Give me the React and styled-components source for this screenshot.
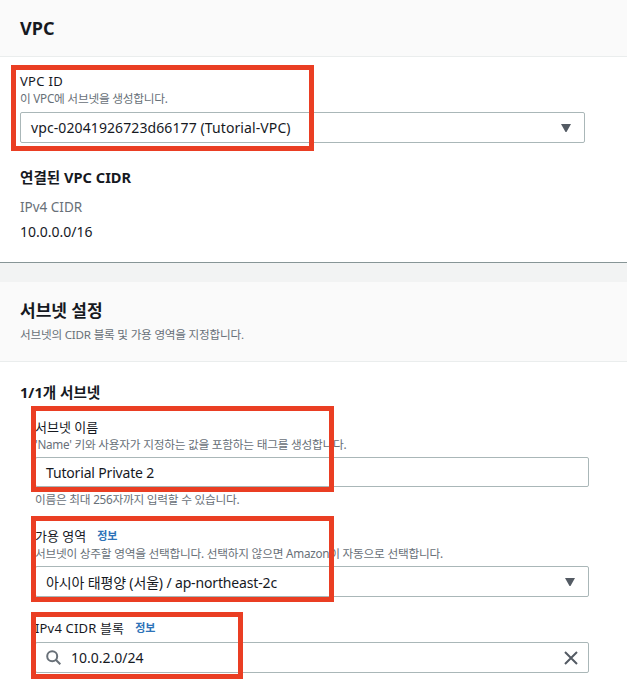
import React from "react";
import styled, { createGlobalStyle } from "styled-components";

const Global = createGlobalStyle`
  html, body { margin: 0; padding: 0; background: #fff; }
  body { font-family: "Noto Sans", "Noto Sans CJK KR", sans-serif; color: #16191f; width: 627px; height: 681px; overflow: hidden; }
`;
const Page = styled.div`position: relative; width: 627px; height: 681px; overflow: hidden;`;
const Head = styled.div`
  background: #fafafa; border-bottom: 1px solid #eaeded; padding: 0 20px;
  height: ${p => p.$h}px; display: flex; flex-direction: column; justify-content: center;
`;
const Title = styled.h2`margin: 0; font-size: ${p => p.$size}px; line-height: 22px; font-weight: 700;`;
const HeadDesc = styled.div`font-size: 11.6px; line-height: 16px; color: #687078; margin-top: 5px; letter-spacing: -0.2px;`;
const Body = styled.div`padding: ${p => p.$pad}; height: ${p => p.$h}px; box-sizing: border-box;`;
const Band = styled.div`height: 19px; background: #f2f3f3; border-top: 1px solid #879596;`;
const Field = styled.div`margin-left: 15px; margin-bottom: ${p => p.$mb || 0}px;`;
const Label = styled.div`display: flex; align-items: center; gap: 11px; font-size: 13px; line-height: 18px; height: 18px; letter-spacing: ${p => p.$ls || "0"};`;
const Info = styled.span`font-size: 11px; font-weight: 700; color: #2e73b8; letter-spacing: 0;`;
const Desc = styled.div`font-size: 11.7px; line-height: 15px; height: 15px; color: #687078; letter-spacing: -0.24px; white-space: nowrap; margin-top: 1px;`;
const Hint = styled(Desc)`margin-top: 5px;`;
const Box = styled.div`
  box-sizing: border-box; height: ${p => p.$h}px; width: ${p => p.$w}px; margin-top: ${p => p.$mt || 0}px; border: 1px solid #aab7b8; border-radius: 2px;
  background: #fff; display: flex; align-items: center; padding: 0 ${p => p.$pr || 13}px 0 10px; font-size: 14px; color: #16191f; white-space: nowrap;
`;
const Value = styled.span`flex: 1; letter-spacing: ${p => p.$ls || "0"};`;
const Sub = styled.h3`margin: ${p => p.$m || "0"}; font-size: 14.6px; line-height: 20px; font-weight: 700;`;
const Small = styled.div`font-size: 13.5px; line-height: 18px; color: #687078; margin-top: 11px;`;
const Val = styled.div`font-size: 14px; line-height: 18px; margin-top: 7px;`;
const SearchIcon = styled.svg`margin-right: 10px; flex: none;`;
const Mark = styled.div`
  position: absolute; box-sizing: border-box; border: 5px solid #ea3e23; pointer-events: none;
  left: ${p => p.$x}px; top: ${p => p.$y}px; width: ${p => p.$w}px; height: ${p => p.$h}px;
`;
const Caret = () => (
  <svg width="10" height="8" viewBox="0 0 10 8" aria-hidden="true"><path d="M0 0h10L5.5 8h-1z" fill="#545b64" /></svg>
);
const Search = () => (
  <SearchIcon width="15" height="15" viewBox="0 0 15 15" fill="none" stroke="#687078" strokeWidth="2" aria-hidden="true"><circle cx="6.2" cy="6.2" r="5" /><path d="M9.8 9.8l4.5 4.5" /></SearchIcon>
);
const Close = () => (
  <svg width="14" height="14" viewBox="0 0 14 14" fill="none" stroke="#545b64" strokeWidth="2" aria-hidden="true"><path d="M1 1l12 12M13 1L1 13" /></svg>
);

export default function App() {
  return (
    <Page>
      <Global />
      <Head $h={56}><Title $size={18}>VPC</Title></Head>
      <Body $pad="15px 20px 0" $h={205}>
        <Label $ls="0.3px">VPC ID</Label>
        <Desc>이 VPC에 서브넷을 생성합니다.</Desc>
        <Box $w={565} $h={31} $mt={6}><Value $ls="0.1px">vpc-02041926723d66177 (Tutorial-VPC)</Value><Caret /></Box>
        <Sub $m="24px 0 0">연결된 VPC CIDR</Sub>
        <Small>IPv4 CIDR</Small>
        <Val>10.0.0.0/16</Val>
      </Body>
      <Band />
      <Head $h={79}>
        <Title $size={17}>서브넷 설정</Title>
        <HeadDesc>서브넷의 CIDR 블록 및 가용 영역을 지정합니다.</HeadDesc>
      </Head>
      <Body $pad="20px 20px 0" $h={319}>
        <Sub $m="0 0 16px">1/1개 서브넷</Sub>
        <Field $mb={20}>
          <Label>서브넷 이름</Label>
          <Desc>'Name' 키와 사용자가 지정하는 값을 포함하는 태그를 생성합니다.</Desc>
          <Box $w={554} $h={30} $mt={5}><Value $ls="-0.17px">Tutorial Private 2</Value></Box>
          <Hint>이름은 최대 256자까지 입력할 수 있습니다.</Hint>
        </Field>
        <Field $mb={22}>
          <Label>가용 영역 <Info>정보</Info></Label>
          <Desc>서브넷이 상주할 영역을 선택합니다. 선택하지 않으면 Amazon이 자동으로 선택합니다.</Desc>
          <Box $w={554} $h={31} $mt={5}><Value $ls="-0.15px">아시아 태평양 (서울) / ap-northeast-2c</Value><Caret /></Box>
        </Field>
        <Field>
          <Label $ls="0.17px">IPv4 CIDR 블록 <Info>정보</Info></Label>
          <Box $w={554} $h={31} $mt={5} $pr={10}><Search /><Value>10.0.2.0/24</Value><Close /></Box>
        </Field>
      </Body>
      <Mark $x={11} $y={65} $w={303} $h={86} />
      <Mark $x={31} $y={406} $w={303} $h={86} />
      <Mark $x={31} $y={516} $w={303} $h={86} />
      <Mark $x={31} $y={612} $w={212} $h={67} />
    </Page>
  );
}
